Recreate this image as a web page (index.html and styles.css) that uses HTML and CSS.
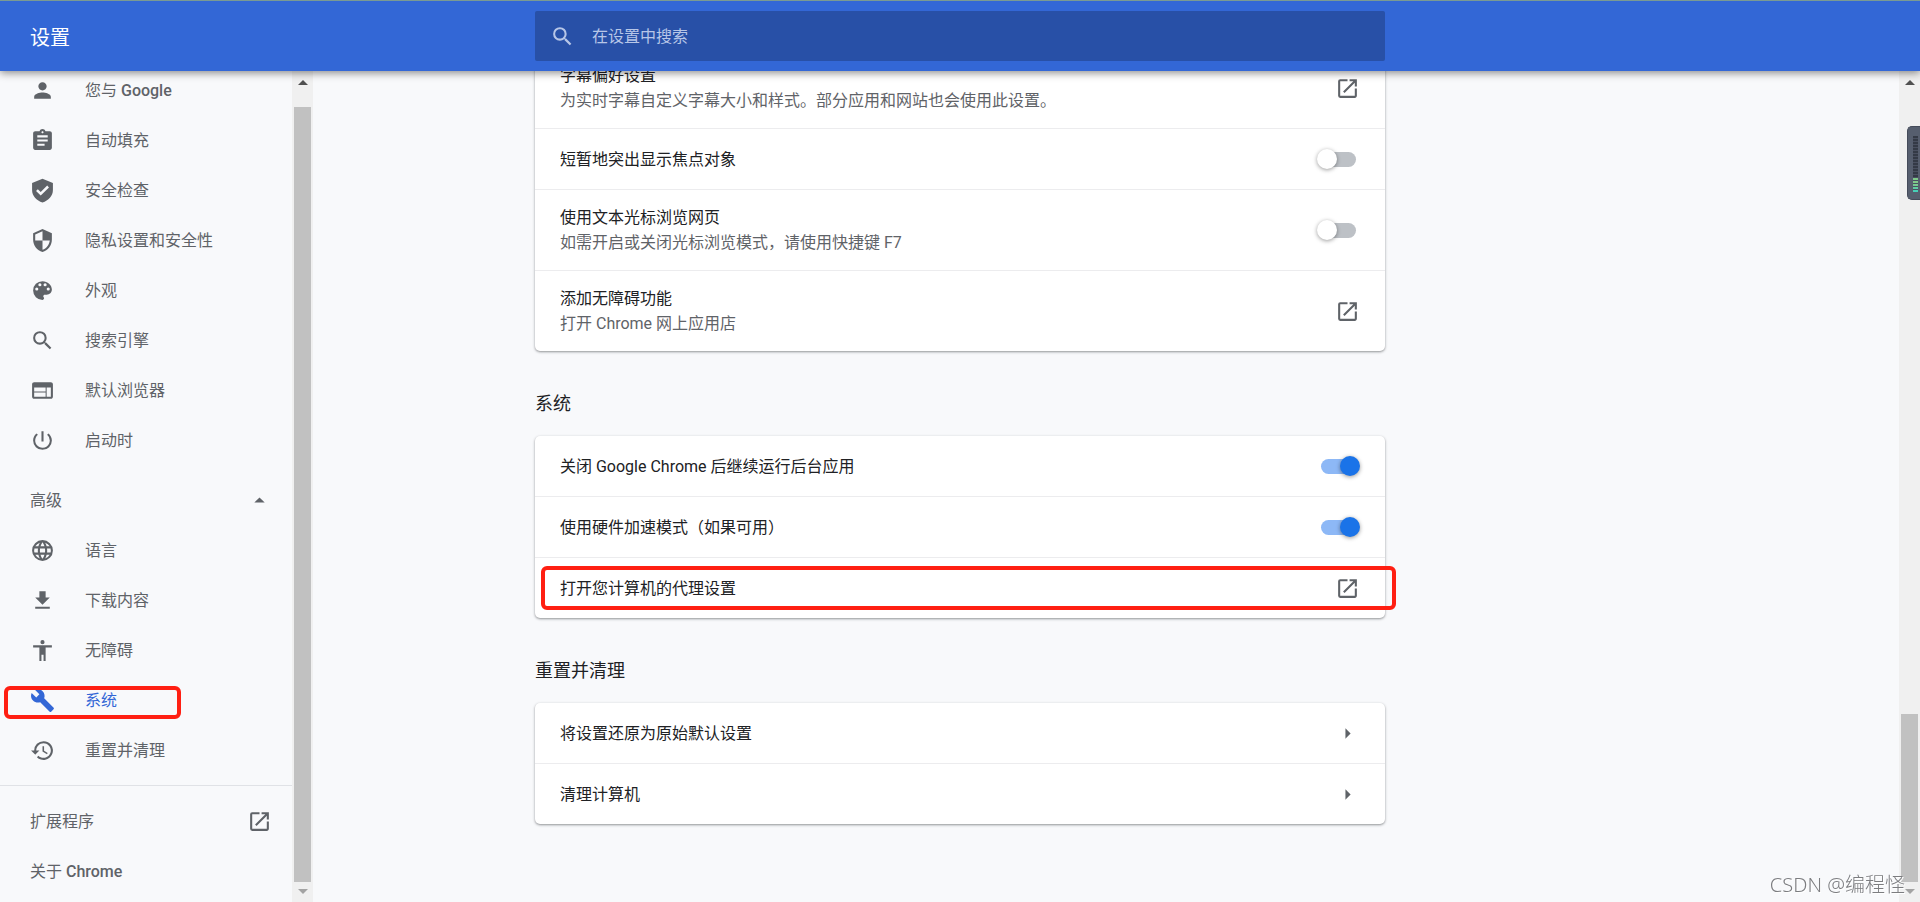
FILE: index.html
```html
<!DOCTYPE html>
<html lang="zh-CN">
<head>
  <meta charset="UTF-8">
  <meta name="viewport" content="width=device-width, initial-scale=1.0">
  <title>设置</title>
  <link rel="stylesheet" href="styles.css">
</head>
<body>
<!-- 公用图标 -->
<svg class="symbols" aria-hidden="true">
  <symbol id="search" viewBox="0 0 24 24"><path d="M15.5 14h-.79l-.28-.27A6.47 6.47 0 0 0 16 9.5 6.5 6.5 0 1 0 9.500 16c1.610 0 3.090-.59 4.230-1.570l.27.28v.79l5 4.990L20.490 19l-4.990-5zm-6 0C7.010 14 5 11.990 5 9.500S7.010 5 9.500 5 14 7.010 14 9.500 11.990 14 9.500 14z"/></symbol>
  <symbol id="launch" viewBox="0 0 24 24"><path d="M19 19H5V5h7V3H5a2 2 0 0 0-2 2v14a2 2 0 0 0 2 2h14c1.100 0 2-.9 2-2v-7h-2v7zM14 3v2h3.590l-9.830 9.830 1.410 1.410L19 6.410V10h2V3h-7z"/></symbol>
  <symbol id="right" viewBox="0 0 24 24"><path d="M10 7l5 5-5 5z"/></symbol>
</svg>

<header class="toolbar">
  <h1 class="toolbar-title">设置</h1>
  <label class="search-box">
    <svg class="icon"><use href="#search"/></svg>
    <input type="search" class="search-input" placeholder="在设置中搜索" aria-label="在设置中搜索">
  </label>
</header>

<div class="container">
  <!-- 左侧菜单 -->
  <aside class="sidebar">
    <nav class="menu">
      <a class="menu-item" href="#people"><svg class="icon" viewBox="0 0 24 24"><path d="M12 12c2.210 0 4-1.790 4-4s-1.790-4-4-4-4 1.790-4 4 1.790 4 4 4zm0 2c-2.670 0-8 1.340-8 4v2h16v-2c0-2.660-5.330-4-8-4z"/></svg><span>您与 <b>Google</b></span></a>
      <a class="menu-item" href="#autofill"><svg class="icon" viewBox="0 0 24 24"><path d="M19 3h-4.180C14.400 1.840 13.300 1 12 1s-2.400.84-2.820 2H5c-1.100 0-2 .9-2 2v14c0 1.100.9 2 2 2h14c1.100 0 2-.9 2-2V5c0-1.100-.9-2-2-2zm-7 0c.55 0 1 .45 1 1s-.45 1-1 1-1-.45-1-1 .45-1 1-1zm2 14H7v-2h7v2zm3-4H7v-2h10v2zm0-4H7V7h10v2z"/></svg><span>自动填充</span></a>
      <a class="menu-item" href="#safety"><svg class="icon" viewBox="0 0 24 24"><path d="M12 .8L2 4.800v6.700c0 5.600 4.200 10.300 10 12 5.800-1.700 10-6.400 10-12V4.800L12 .8zm-1.700 16.100l-4.500-4.500 1.700-1.700 2.800 2.800 6.200-6.200 1.700 1.700-7.900 7.900z"/></svg><span>安全检查</span></a>
      <a class="menu-item" href="#privacy"><svg class="icon" viewBox="0 0 24 24"><path d="M12 1L3 5v6c0 5.550 3.840 10.740 9 12 5.160-1.260 9-6.450 9-12V5l-9-4zm0 10.990h7c-.53 4.120-3.280 7.790-7 8.940V12H5V6.300l7-3.110v8.800z"/></svg><span>隐私设置和安全性</span></a>
      <a class="menu-item" href="#appearance"><svg class="icon" viewBox="0 0 24 24"><path d="M12 3a9 9 0 0 0 0 18c.83 0 1.500-.67 1.500-1.500 0-.39-.15-.74-.39-1.010-.23-.26-.38-.61-.38-.99 0-.83.67-1.500 1.500-1.500H16c2.760 0 5-2.240 5-5 0-4.420-4.030-8-9-8zm-5.500 9a1.500 1.500 0 1 1 0-3 1.500 1.500 0 0 1 0 3zm3-4a1.500 1.500 0 1 1 0-3 1.500 1.500 0 0 1 0 3zm5 0a1.500 1.500 0 1 1 0-3 1.500 1.500 0 0 1 0 3zm3 4a1.500 1.500 0 1 1 0-3 1.500 1.500 0 0 1 0 3z"/></svg><span>外观</span></a>
      <a class="menu-item" href="#engine"><svg class="icon"><use href="#search"/></svg><span>搜索引擎</span></a>
      <a class="menu-item" href="#browser"><svg class="icon" viewBox="0 0 24 24"><path d="M20 4H4c-1.100 0-1.990.9-1.990 2L2 18c0 1.100.9 2 2 2h16c1.100 0 2-.9 2-2V6c0-1.100-.9-2-2-2zm-5 14H4v-4h11v4zm0-5H4V9h11v4zm5 5h-4V9h4v9z"/></svg><span>默认浏览器</span></a>
      <a class="menu-item" href="#startup"><svg class="icon" viewBox="0 0 24 24"><path d="M13 3h-2v10h2V3zm4.830 2.170l-1.420 1.420A6.920 6.920 0 0 1 19 12a7 7 0 1 1-11.410-5.420L6.170 5.170A8.930 8.930 0 0 0 3 12a9 9 0 0 0 18 0c0-2.740-1.230-5.180-3.170-6.830z"/></svg><span>启动时</span></a>

      <button class="menu-item advanced" type="button"><span>高级</span><svg class="icon" viewBox="0 0 24 24"><path d="M7 14l5-5 5 5z"/></svg></button>

      <a class="menu-item" href="#languages"><svg class="icon" viewBox="0 0 24 24"><path d="M11.990 2A10 10 0 1 0 12 22 10 10 0 0 0 11.990 2zm6.930 6h-2.950a15.650 15.650 0 0 0-1.380-3.560A8.030 8.030 0 0 1 18.920 8zM12 4.040c.83 1.200 1.480 2.530 1.910 3.960h-3.820c.43-1.430 1.080-2.760 1.910-3.960zM4.260 14a8.200 8.200 0 0 1 0-4h3.380a16.500 16.500 0 0 0 0 4H4.260zm.82 2h2.950c.32 1.250.78 2.450 1.380 3.560A7.990 7.990 0 0 1 5.080 16zm2.950-8H5.080a7.990 7.990 0 0 1 4.330-3.560A15.650 15.650 0 0 0 8.030 8zM12 19.960c-.83-1.200-1.480-2.530-1.910-3.960h3.820A14.100 14.100 0 0 1 12 19.960zM14.340 14H9.660a14.700 14.700 0 0 1 0-4h4.680a14.300 14.300 0 0 1 0 4zm.25 5.560c.6-1.110 1.060-2.310 1.380-3.560h2.950a8.030 8.030 0 0 1-4.330 3.560zM16.360 14a16.500 16.500 0 0 0 0-4h3.380a8.200 8.200 0 0 1 0 4h-3.380z"/></svg><span>语言</span></a>
      <a class="menu-item" href="#downloads"><svg class="icon" viewBox="0 0 24 24"><path d="M19 9h-4V3H9v6H5l7 7 7-7zM5 18v2h14v-2H5z"/></svg><span>下载内容</span></a>
      <a class="menu-item" href="#accessibility"><svg class="icon" viewBox="0 0 24 24"><path d="M12 2a2 2 0 1 1 0 4 2 2 0 0 1 0-4zm9 7h-6v13h-2v-6h-2v6H9V9H3V7h18v2z"/></svg><span>无障碍</span></a>
      <a class="menu-item selected" href="#system"><svg class="icon" viewBox="0 0 24 24"><path d="M22.700 19l-9.100-9.100c.9-2.300.4-5-1.500-6.900-2-2-5-2.400-7.400-1.300L9 6 6 9 1.600 4.700C.4 7.100.9 10.100 2.900 12.100c1.900 1.900 4.600 2.400 6.900 1.500l9.100 9.100c.4.4 1 .4 1.400 0l2.300-2.300c.5-.4.5-1.100.1-1.400z"/></svg><span>系统</span></a>
      <a class="menu-item" href="#reset"><svg class="icon" viewBox="0 0 24 24"><path d="M13 3a9 9 0 0 0-9 9H1l3.890 3.890.07.14L9 12H6c0-3.870 3.130-7 7-7s7 3.130 7 7-3.130 7-7 7c-1.930 0-3.680-.79-4.940-2.060l-1.420 1.420A9 9 0 1 0 13 3zm-1 5v5l4.280 2.540.72-1.210-3.500-2.080V8H12z"/></svg><span>重置并清理</span></a>

      <div class="menu-footer">
        <a class="menu-item spread" href="#extensions"><span>扩展程序</span><svg class="icon"><use href="#launch"/></svg></a>
        <a class="menu-item spread" href="#about"><span>关于 <b>Chrome</b></span></a>
      </div>
      <div class="mark mark-menu"></div>
    </nav>
    <div class="scrollbar"><i class="arrow-up"></i><div class="thumb"></div><i class="arrow-down"></i></div>
  </aside>

  <!-- 设置内容 -->
  <main class="content">
    <section>
      <div class="card">
        <a class="row" href="#captions">
          <div class="text"><p>字幕偏好设置</p><p class="sub">为实时字幕自定义字幕大小和样式。部分应用和网站也会使用此设置。</p></div>
          <svg class="icon"><use href="#launch"/></svg>
        </a>
        <label class="row">
          <span class="text">短暂地突出显示焦点对象</span>
          <input type="checkbox" class="toggle">
        </label>
        <label class="row">
          <span class="text">使用文本光标浏览网页<br><span class="sub">如需开启或关闭光标浏览模式，请使用快捷键 F7</span></span>
          <input type="checkbox" class="toggle">
        </label>
        <a class="row" href="#webstore">
          <div class="text"><p>添加无障碍功能</p><p class="sub">打开 Chrome 网上应用店</p></div>
          <svg class="icon"><use href="#launch"/></svg>
        </a>
      </div>
    </section>

    <section>
      <h2 class="section-title">系统</h2>
      <div class="card">
        <label class="row">
          <span class="text">关闭 Google Chrome 后继续运行后台应用</span>
          <input type="checkbox" class="toggle" checked>
        </label>
        <label class="row">
          <span class="text">使用硬件加速模式（如果可用）</span>
          <input type="checkbox" class="toggle" checked>
        </label>
        <a class="row" href="#proxy">
          <span class="text">打开您计算机的代理设置</span>
          <svg class="icon"><use href="#launch"/></svg>
          <span class="mark mark-row"></span>
        </a>
      </div>
    </section>

    <section>
      <h2 class="section-title">重置并清理</h2>
      <div class="card">
        <a class="row" href="#restore"><span class="text">将设置还原为原始默认设置</span><svg class="icon"><use href="#right"/></svg></a>
        <a class="row" href="#cleanup"><span class="text">清理计算机</span><svg class="icon"><use href="#right"/></svg></a>
      </div>
    </section>
  </main>

  <div class="scrollbar page-scrollbar"><i class="arrow-up"></i><div class="thumb"></div><i class="arrow-down"></i></div>
</div>

<div class="meter"><div class="meter-bars"></div></div>
<div class="watermark">CSDN @编程怪</div>
</body>
</html>
```
FILE: styles.css
```css
* {
  box-sizing: border-box;
}
body {
  margin: 0;
  height: 100vh;
  display: flex;
  flex-direction: column;
  overflow: hidden;
  background: #f8f9fb;
  color: #202124;
  font-family: Roboto, "Noto Sans CJK SC", sans-serif;
  font-size: 16px;
  line-height: 25px;
}
a {
  color: inherit;
  text-decoration: none;
}
p {
  margin: 0;
}
b {
  font-weight: 500;
}
.symbols {
  position: absolute;
  width: 0;
  height: 0;
}
.icon {
  width: 25px;
  height: 25px;
  flex: none;
  fill: #5f6368;
}

/* 顶部工具栏 */
.toolbar,
.container {
  display: grid;
  grid-template-columns: minmax(313px, 1fr) minmax(0, 850px) minmax(21px, 1fr);
}
.toolbar {
  flex: none;
  height: 71px;
  align-items: center;
  background: #3367d6;
  border-top: 1px solid #7b9a92;
  box-shadow: 0 2px 8px rgba(0, 0, 0, 0.45);
  position: relative;
  z-index: 2;
}
.toolbar-title {
  margin: 0;
  padding: 4px 30px 0;
  font-size: 20px;
  font-weight: 400;
  color: #fff;
}
.search-box {
  display: flex;
  align-items: center;
  gap: 17px;
  height: 50px;
  padding: 0 15px;
  border-radius: 2px;
  background: #2850a7;
}
.search-box .icon {
  fill: #b7c6e7;
}
.search-input {
  flex: 1;
  padding: 0;
  border: 0;
  outline: 0;
  background: none;
  color: #fff;
  font: inherit;
}
.search-input::placeholder {
  color: #b7c6e7;
}

.container {
  flex: 1;
  min-height: 0;
}

/* 左侧菜单 */
.sidebar {
  width: 313px;
  min-height: 0;
  display: flex;
  color: #5f6368;
}
.menu {
  flex: 1;
  margin-top: -6px;
  position: relative;
}
.menu-item {
  display: flex;
  align-items: center;
  gap: 30px;
  width: 100%;
  height: 50px;
  padding: 0 20px 0 30px;
}
.advanced,
.spread {
  justify-content: space-between;
}
.advanced {
  margin-top: 10px;
  border: 0;
  background: none;
  color: inherit;
  font: inherit;
}
.selected,
.selected .icon {
  color: #3367d6;
  fill: #3367d6;
}
.menu-footer {
  margin-top: 10px;
  padding-top: 10px;
  border-top: 1px solid #e0e2e6;
}

/* 滚动条 */
.scrollbar {
  display: flex;
  flex-direction: column;
  align-items: center;
  width: 21px;
  padding: 9px 0 8px;
  background: #f0f0f0;
}
.thumb {
  flex: 1;
  width: 17px;
  margin: 22px 0 7px;
  background: #c1c1c1;
}
.arrow-up,
.arrow-down {
  border: 5px solid transparent;
}
.arrow-up {
  border-top: 0;
  border-bottom-color: #505050;
}
.arrow-down {
  border-bottom: 0;
  border-top-color: #a3a3a3;
}
.page-scrollbar {
  justify-self: end;
}
.page-scrollbar .thumb {
  flex: none;
  height: 168px;
  margin-top: auto;
}

/* 设置卡片，首张卡片滚动到工具栏下方 */
.content {
  margin-top: -23px;
}
.section-title {
  margin: 0;
  padding: 40px 0 20px;
  font-size: 18px;
  font-weight: 400;
  line-height: 25px;
}
.card {
  border-radius: 5px;
  background: #fff;
  box-shadow: 0 1px 3px rgba(60, 64, 67, 0.3), 0 1px 2px rgba(60, 64, 67, 0.3);
}
.row {
  display: flex;
  align-items: center;
  min-height: 60px;
  padding: 15px 25px;
  position: relative;
}
.row + .row {
  min-height: 61px;
  border-top: 1px solid #ececee;
}
.text {
  flex: 1;
}
.sub {
  color: #5f6368;
}

/* 开关 */
.toggle {
  appearance: none;
  flex: none;
  width: 35px;
  height: 15px;
  margin: 0 4px;
  border-radius: 8px;
  background: #bdc1c6;
  position: relative;
}
.toggle::before {
  content: "";
  position: absolute;
  top: -3px;
  left: -4px;
  width: 20px;
  height: 20px;
  border-radius: 50%;
  background: #fff;
  box-shadow: 0 1px 4px rgba(0, 0, 0, 0.4);
}
.toggle:checked {
  background: #8db8f6;
}
.toggle:checked::before {
  left: 19px;
  background: #1a73e8;
}

/* 红色标注框 */
.mark {
  position: absolute;
  border: 4px solid #ff1f12;
  border-radius: 6px;
  pointer-events: none;
}
.mark-menu {
  left: 4px;
  top: 621px;
  width: 177px;
  height: 33px;
}
.mark-row {
  left: 6px;
  right: -11px;
  top: 8px;
  bottom: 8px;
}

/* 右侧音量浮标 */
.meter {
  position: fixed;
  top: 126px;
  right: 0;
  z-index: 3;
  width: 13px;
  height: 74px;
  padding: 9px 2px 8px 5px;
  border: 1px solid #454b5a;
  border-right: 0;
  border-radius: 5px 0 0 5px;
  background: #565e6e;
}
.meter-bars {
  height: 56px;
  background:
    repeating-linear-gradient(transparent 0 2px, #4a5060 2px 3px),
    linear-gradient(#343a46 0 42px, #7fc98a 42px 48px, #40d0bd 56px);
}
.watermark {
  position: fixed;
  right: 15px;
  bottom: 5px;
  z-index: 3;
  font-family: "Noto Sans", "Noto Sans CJK SC", sans-serif;
  font-size: 20px;
  font-weight: 300;
  color: #7c7d80;
  text-shadow: 1px 1px 0 #fff;
}
```
